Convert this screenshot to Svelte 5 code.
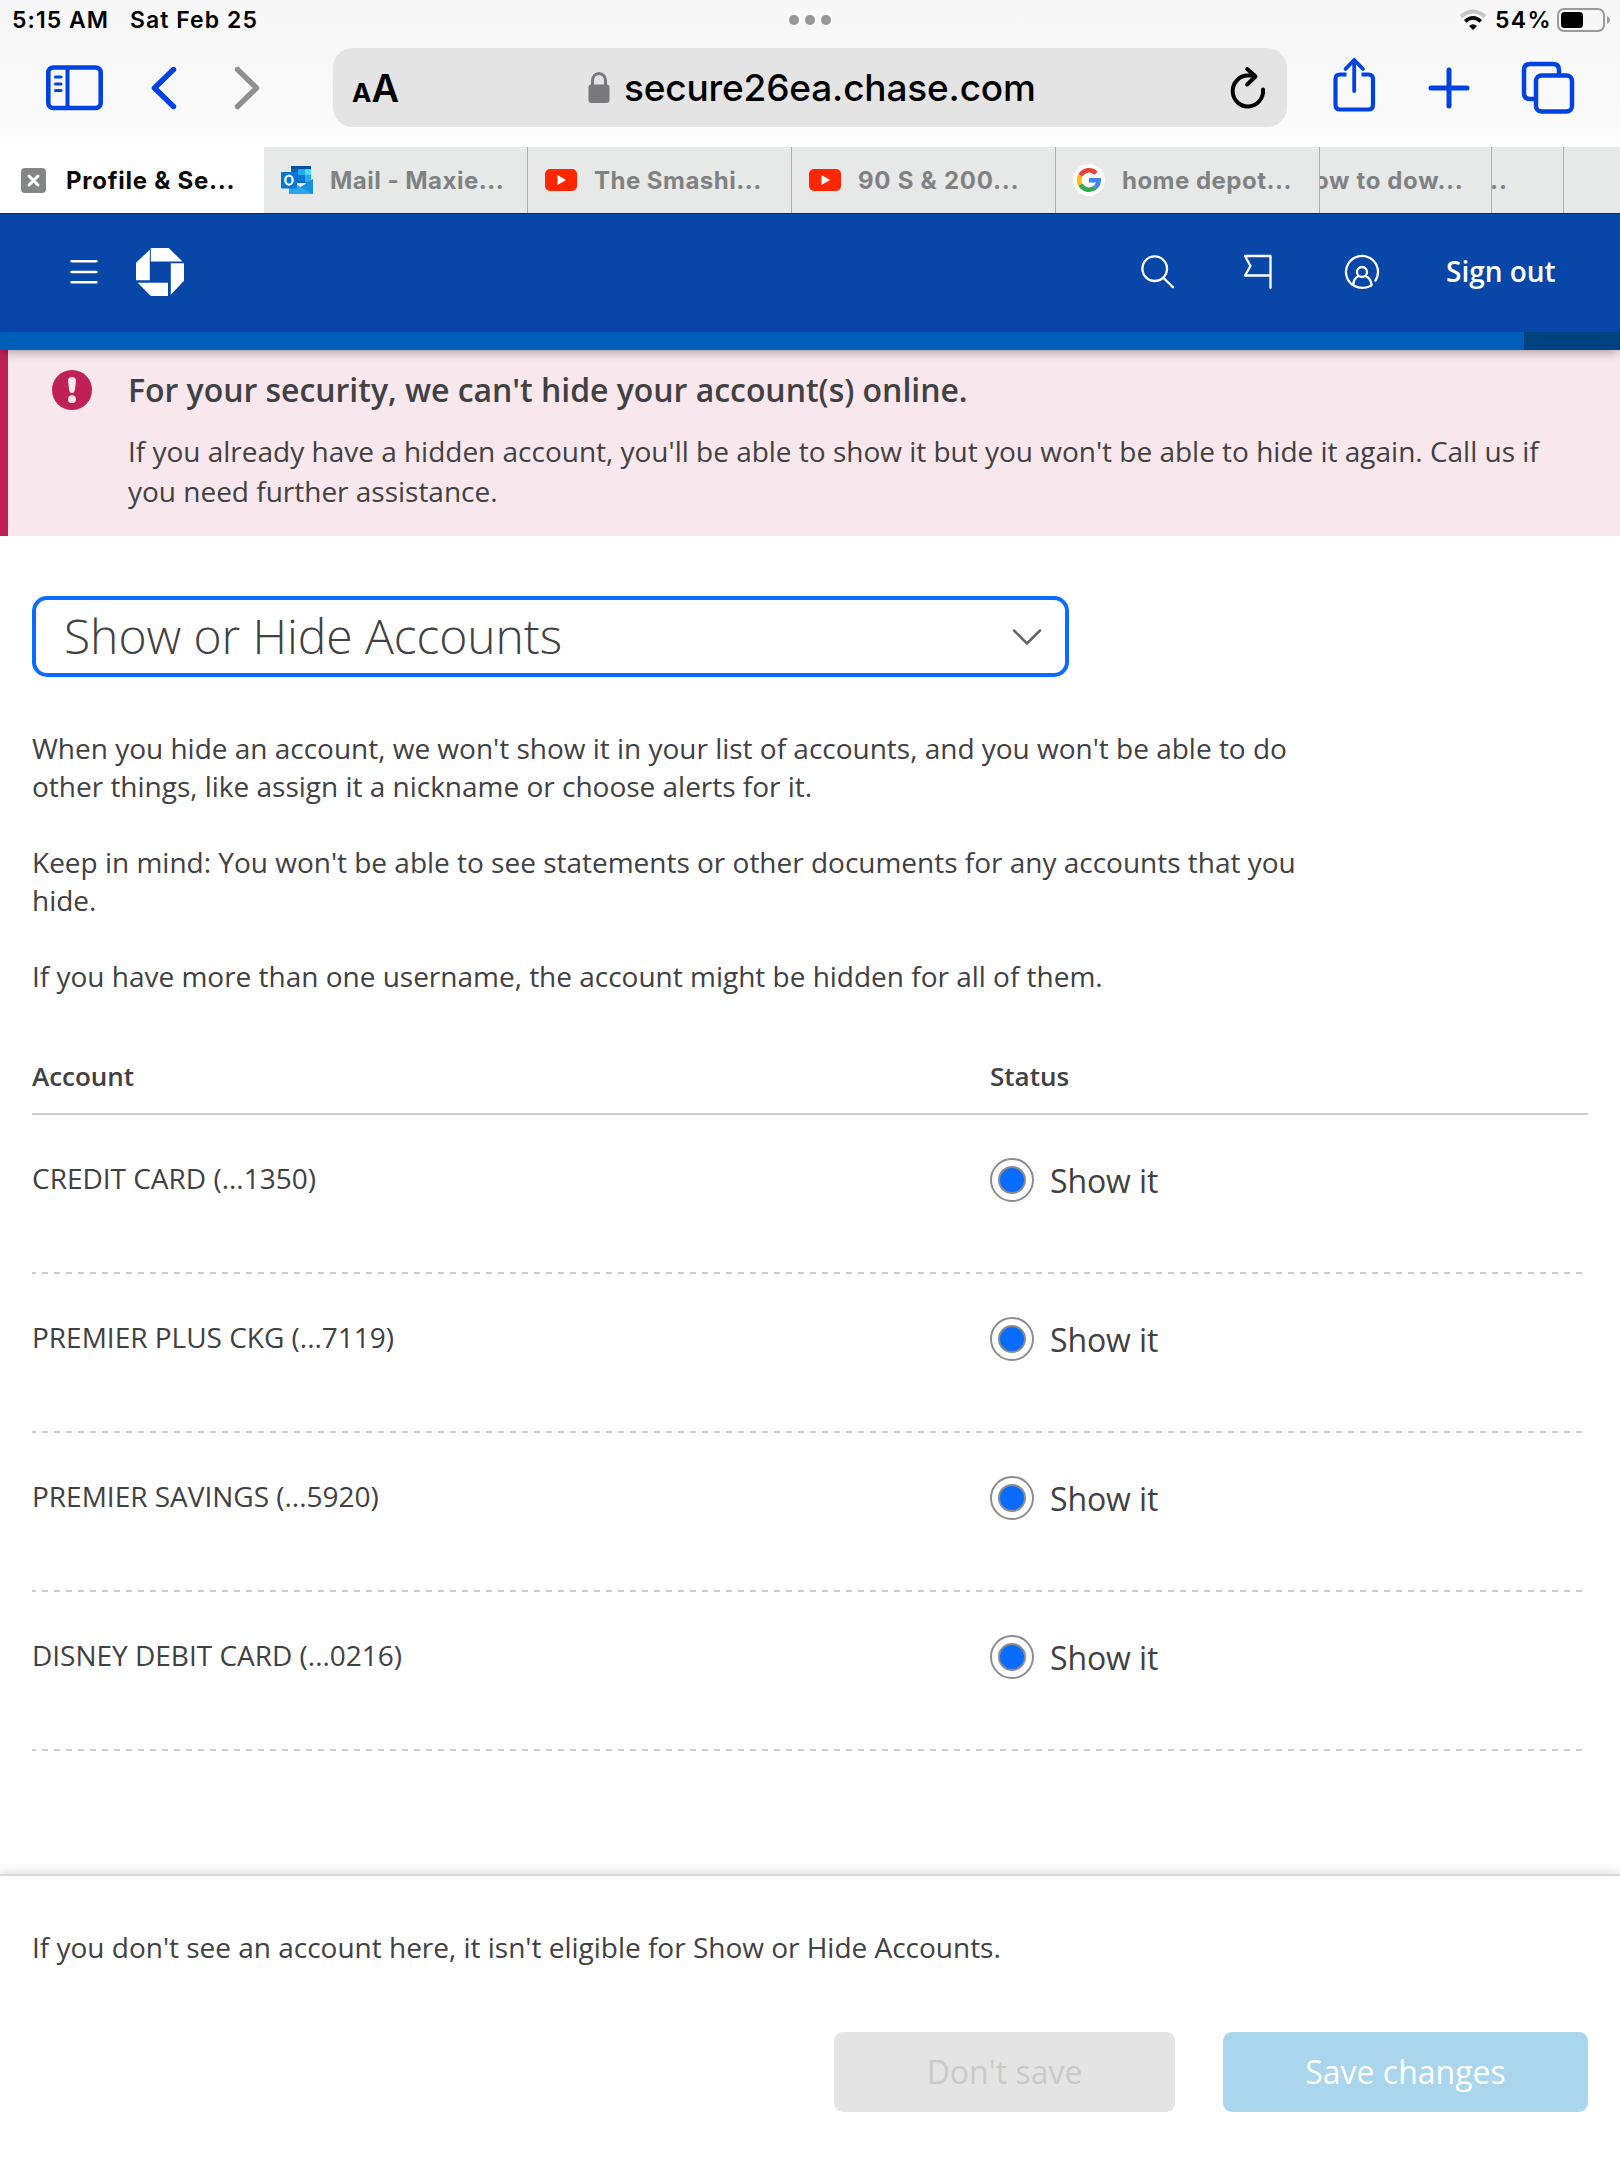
<script>
  const accounts = [
    'CREDIT CARD (...1350)',
    'PREMIER PLUS CKG (...7119)',
    'PREMIER SAVINGS (...5920)',
    'DISNEY DEBIT CARD (...0216)'
  ];
</script>

{#snippet youtube()}
  <svg class="favicon" viewBox="0 0 32 32">
    <rect x="0" y="5" width="32" height="22" rx="5" fill="#ff2600" />
    <path d="M12.5 11 L21 16 L12.5 21Z" fill="#fff" />
  </svg>
{/snippet}

<div class="page">
  <div class="browser">
    <div class="status">
      <span class="time">5:15 AM</span>
      <span class="date">Sat Feb 25</span>
      <div class="dots"><i></i><i></i><i></i></div>
      <svg class="wifi" width="28" height="22" viewBox="0 0 28 22" fill="none">
        <path d="M2 7.5 Q14 -2.5 26 7.5" stroke="#c6c6c6" stroke-width="4" />
        <path d="M6.2 12.3 Q14 5.5 21.8 12.3" stroke="#000" stroke-width="3.6" />
        <path d="M14 21 L10 17 Q14 13.6 18 17Z" fill="#000" />
      </svg>
      <span class="pct">54%</span>
      <svg class="battery" width="54" height="24" viewBox="0 0 54 24">
        <rect x="1" y="1" width="46" height="22" rx="6" fill="none" stroke="#9a9a9a" stroke-width="2" />
        <rect x="4" y="4" width="22" height="16" rx="3.5" fill="#000" />
        <path d="M50 8 Q53 9.5 53 12 Q53 14.5 50 16Z" fill="#9a9a9a" />
      </svg>
    </div>

    <div class="toolbar">
      <svg class="sidebar" width="57" height="46" viewBox="0 0 57 46" fill="none" stroke="#0042e0" stroke-linecap="round">
        <rect x="2.3" y="2.5" width="52.4" height="40.5" rx="5" stroke-width="4.6" />
        <path d="M21.5 3V43" stroke-width="4" stroke-linecap="butt" />
        <path d="M9.5 12H15M9.5 19H15M9.5 25.5H15" stroke-width="3" />
      </svg>
      <svg class="back" width="26" height="44" viewBox="0 0 26 44" fill="none" stroke="#0042e0" stroke-width="5.4" stroke-linecap="round" stroke-linejoin="round">
        <path d="M22.5 3.5L3.5 22L22.5 40.5" />
      </svg>
      <svg class="forward" width="26" height="44" viewBox="0 0 26 44" fill="none" stroke="#8f9094" stroke-width="5.4" stroke-linecap="round" stroke-linejoin="round">
        <path d="M3.5 3.5L22.5 22L3.5 40.5" />
      </svg>
      <div class="urlbar">
        <span class="reader"><small>A</small><b>A</b></span>
        <svg class="lock" width="22" height="32" viewBox="0 0 22 32">
          <path d="M4.5 14V8.5a6.5 7 0 0 1 13 0V14" fill="none" stroke="#78787e" stroke-width="3" />
          <rect x="0.5" y="12.5" width="21" height="18.5" rx="3" fill="#78787e" />
        </svg>
        <span class="host">secure26ea.chase.com</span>
        <svg class="reload" width="36" height="44" viewBox="0 0 36 44" fill="none" stroke="#000" stroke-width="4" stroke-linecap="round" stroke-linejoin="round">
          <path d="M33 23.5A15.2 15.5 0 1 1 17.8 9.5H24.5" />
          <path d="M17.2 3L25.5 10.5L17.2 18.5" />
        </svg>
      </div>
      <svg class="share" width="44" height="56" viewBox="0 0 44 56" fill="none" stroke="#0042e0" stroke-width="4.2" stroke-linecap="round" stroke-linejoin="round">
        <path d="M14.5 17.5H8Q3.5 17.5 3.5 22V47.5Q3.5 52.5 8 52.5H36.5Q41 52.5 41 47.5V22Q41 17.5 36.5 17.5H29.5" stroke-linecap="butt" />
        <path d="M22.2 34V3M13.5 12L22.2 3L31 12" stroke-width="3.8" />
      </svg>
      <svg class="plus" width="42" height="42" viewBox="0 0 42 42" stroke="#0042e0" stroke-width="5" stroke-linecap="round">
        <path d="M21 3V39M3 21H39" />
      </svg>
      <svg class="windows" width="54" height="54" viewBox="0 0 54 54" fill="none" stroke="#0042e0" stroke-width="4.5">
        <path d="M13 38H9Q3 38 3 32V9Q3 3 9 3H32Q38 3 38 9V13" />
        <rect x="15" y="14.5" width="36" height="36" rx="5.5" />
      </svg>
    </div>

    <div class="tabs">
      <div class="tab active">
        <svg class="close" width="25" height="25" viewBox="0 0 25 25">
          <rect width="25" height="25" rx="4" fill="#858686" />
          <path d="M8 8L17 17M17 8L8 17" stroke="#fff" stroke-width="3" stroke-linecap="round" />
        </svg>
        <span>Profile &amp; Se...</span>
      </div>
      <div class="tab">
        <svg class="favicon" viewBox="0 0 32 32">
          <path d="M10 2H30V19H10Z" fill="#0a64b8" />
          <path d="M10 2H30V5H10Z" fill="#0553a0" />
          <path d="M17 5H24V11.5H17Z" fill="#28a8ea" />
          <path d="M24 5H30V11.5H24Z" fill="#50d9ff" />
          <path d="M17 11.5H24V18H17Z" fill="#0078d4" />
          <path d="M24 11.5H30V18H24Z" fill="#28a8ea" />
          <path d="M8 17L20 23L32 15V30H8Z" fill="#28a8ea" />
          <path d="M20 23L32 15V30Z" fill="#1490df" />
          <rect x="0" y="8" width="16" height="16.5" rx="1" fill="#0078d4" />
          <ellipse cx="8" cy="16.2" rx="3.7" ry="4.5" fill="none" stroke="#fff" stroke-width="2.3" />
        </svg>
        <span>Mail - Maxie...</span>
      </div>
      <div class="tab">{@render youtube()}<span>The Smashi...</span></div>
      <div class="tab wide">{@render youtube()}<span>90 S &amp; 200...</span></div>
      <div class="tab">
        <svg class="favicon" viewBox="0 0 32 32">
          <circle cx="16" cy="16" r="16" fill="#fff" />
          <g fill="none" stroke-width="4.6">
            <path d="M23 9.3A9.7 9.7 0 0 0 7.5 11.3" stroke="#ea4335" />
            <path d="M7.5 11.3A9.7 9.7 0 0 0 7.5 20.7" stroke="#fbbc05" />
            <path d="M7.5 20.7A9.7 9.7 0 0 0 22.3 23.5" stroke="#34a853" />
            <path d="M22.3 23.5A9.7 9.7 0 0 0 25.7 16.3H16" stroke="#4285f4" />
          </g>
        </svg>
        <span>home depot...</span>
      </div>
      <div class="tab cut"><span>ow to dow...</span></div>
      <div class="tab sliver"><span>...</span></div>
      <div class="tab rest"></div>
    </div>
  </div>

  <header>
    <svg class="menu" width="28" height="28" viewBox="0 0 28 28" stroke="#fff" stroke-width="2.4" stroke-linecap="round">
      <path d="M1.5 3.3H26.5M1.5 14H26.5M1.5 24.2H26.5" />
    </svg>
    <svg class="logo" width="48" height="48" viewBox="0 0 48 48" fill="#fff">
      <path d="M14.8 0H32.7L46.5 13.5H14.8Z" />
      <path d="M34.8 15.3H48V32.7L34.8 46.7Z" />
      <path d="M1.7 34.7H32V48H14.8Z" />
      <path d="M0 14.7L13.8 1.7V32.3H0Z" />
    </svg>
    <svg class="search" width="34" height="34" viewBox="0 0 34 34" fill="none" stroke="#fff" stroke-width="2.3" stroke-linecap="round">
      <circle cx="13.7" cy="13.7" r="12.3" />
      <path d="M22.3 22.7L32 32.3" />
    </svg>
    <svg class="flag" width="30" height="36" viewBox="0 0 30 36" fill="none" stroke="#fff" stroke-width="2.3" stroke-linecap="round" stroke-linejoin="round">
      <path d="M27.5 34V2H2L7.5 12L2 21.5H27.5" />
    </svg>
    <svg class="user" width="36" height="36" viewBox="0 0 36 36" fill="none" stroke="#fff" stroke-width="2.3" stroke-linecap="round">
      <path d="M31.5 26.5A16 16 0 1 0 10 31.8Q18 36 26.5 32Q28 31.5 27.3 29.5C26.5 26 25 23.5 22.3 22.7" />
      <circle cx="18" cy="18" r="5" />
      <path d="M14 22.5Q9.5 24.5 9.3 31" />
    </svg>
    <span class="signout">Sign out</span>
  </header>
  <div class="strip"><div class="stripend"></div></div>

  <section class="alert">
    <svg width="40" height="40" viewBox="0 0 40 40">
      <circle cx="20" cy="20" r="20" fill="#bf2155" />
      <path d="M16 11Q16 7 20 7Q24 7 24 11L22.8 20.5Q22.5 23 20 23Q17.5 23 17.2 20.5Z" fill="#f8e7ec" />
      <circle cx="20" cy="29.2" r="3.9" fill="#f8e7ec" />
    </svg>
    <div>
      <h2>For your security, we can't hide your account(s) online.</h2>
      <p>If you already have a hidden account, you'll be able to show it but you won't be able to hide it again. Call us if<br />you need further assistance.</p>
    </div>
  </section>

  <main>
    <div class="select">
      <span>Show or Hide Accounts</span>
      <svg width="30" height="18" viewBox="0 0 30 18" fill="none" stroke="#666" stroke-width="2.5" stroke-linecap="round" stroke-linejoin="round">
        <path d="M2 2.5L15 15.5L28 2.5" />
      </svg>
    </div>
    <div class="copy">
      <p>When you hide an account, we won't show it in your list of accounts, and you won't be able to do<br />other things, like assign it a nickname or choose alerts for it.</p>
      <p>Keep in mind: You won't be able to see statements or other documents for any accounts that you<br />hide.</p>
      <p>If you have more than one username, the account might be hidden for all of them.</p>
    </div>

    <div class="table">
      <div class="thead"><span>Account</span><span>Status</span></div>
      {#each accounts as account}
        <div class="row">
          <span class="name">{account}</span>
          <div class="choice"><span class="radio"><i></i></span><span class="label">Show it</span></div>
          <svg class="dash" width="1556" height="2" stroke="#ccc" stroke-width="2" stroke-dasharray="6 6" stroke-dashoffset="2">
            <path d="M0 1H934" />
            <path d="M934 1H1556" />
          </svg>
        </div>
      {/each}
    </div>
  </main>

  <footer>
    <p>If you don't see an account here, it isn't eligible for Show or Hide Accounts.</p>
    <div class="actions">
      <div class="btn secondary">Don't save</div>
      <div class="btn primary">Save changes</div>
    </div>
  </footer>
</div>

<style>
  :global(body) { margin: 0; background: #fff; }
  * { box-sizing: border-box; }
  svg { display: block; flex: none; }
  p, h2 { margin: 0; }
  span { white-space: nowrap; }
  .page {
    width: 1620px;
    height: 2160px;
    overflow: hidden;
    display: flex;
    flex-direction: column;
    background: #fff;
    color: #414042;
    font-family: 'Open Sans', 'Noto Sans', sans-serif;
    font-size: 28px;
    letter-spacing: -0.01px;
  }

  .browser {
    height: 213px;
    flex: none;
    background: linear-gradient(#f7f7f7 0, #f9f9fa 100px, #fdfefd 147px);
    font-family: Inter, 'Liberation Sans', sans-serif;
    color: #000;
  }
  .status {
    height: 48px;
    display: flex;
    align-items: center;
    padding: 0 0 8px 12px;
    font-size: 23px;
    font-weight: 600;
    letter-spacing: 1.05px;
  }
  .time { width: 118px; }
  .date { width: 659px; }
  .dots { display: flex; gap: 6px; width: 670px; }
  .dots i { width: 10px; height: 10px; border-radius: 50%; background: #969696; }
  .pct { width: 70px; padding-left: 8px; letter-spacing: 1.4px; }

  .toolbar {
    height: 99px;
    display: flex;
    align-items: flex-start;
    padding-left: 46px;
  }
  .sidebar { margin-top: 17px; }
  .back { margin: 18px 0 0 48px; }
  .forward { margin: 18px 0 0 57px; }
  .urlbar {
    width: 954px;
    height: 79px;
    margin-left: 73px;
    border-radius: 20px;
    background: #e4e4e4;
    display: flex;
    align-items: center;
  }
  .reader { width: 236px; margin-left: 19px; line-height: 40px; margin-top: 5px; }
  .reader small { font-size: 26px; font-weight: 700; }
  .reader b { font-size: 38px; font-weight: 600; }
  .host { width: 606px; margin-left: 14px; font-size: 37px; font-weight: 500; letter-spacing: -0.17px; }
  .share { margin: 9px 0 0 45px; }
  .plus { margin: 19px 0 0 52px; }
  .windows { margin: 13px 0 0 51px; }

  .tabs { display: flex; height: 66px; }
  .tab {
    width: 264px;
    flex: none;
    display: flex;
    align-items: center;
    gap: 17px;
    overflow: hidden;
    padding: 0 0 0 17px;
    border-right: 1px solid #a9abab;
    background: #e7e8e8;
    color: #808282;
    font-size: 24px;
    font-weight: 700;
    letter-spacing: 0.48px;
  }
  .active { background: #fdfefd; color: #0b0b0b; padding-left: 21px; gap: 20px; border: 0; letter-spacing: 0.75px; }
  .wide { letter-spacing: 0.75px; }
  .favicon { width: 32px; height: 32px; }
  .cut { width: 172px; padding-left: 0; letter-spacing: 0.65px; }
  .cut span { margin-left: -6px; }
  .sliver { width: 72px; padding-left: 0; letter-spacing: 1px; }
  .sliver span { margin-left: -11px; }
  .rest { width: 56px; border: 0; }

  header {
    height: 119px;
    flex: none;
    display: flex;
    align-items: center;
    background: #0846a8;
    border-top: 1px solid #06296b;
    color: #fff;
    padding: 0 0 2px 70px;
  }
  .logo { margin-left: 38px; }
  .search { margin-left: 957px; }
  .flag { margin-left: 68px; }
  .user { margin-left: 71px; }
  .signout { margin: -2px 0 0 66px; font-weight: 560; }
  .strip {
    position: relative;
    height: 18px;
    flex: none;
    display: flex;
    justify-content: flex-end;
    background: #005eb8;
    box-shadow: 0 4px 10px -2px rgba(0, 0, 0, 0.35);
  }
  .stripend { width: 96px; background: #00417f; }

  .alert {
    height: 186px;
    flex: none;
    display: flex;
    gap: 36px;
    border-left: 8px solid #bf2155;
    background: #f8e7ec;
    padding: 20px 0 0 44px;
  }
  h2 { font-size: 32px; font-weight: 600; line-height: 40px; letter-spacing: -0.035px; }
  .alert p { margin-top: 21px; line-height: 40px; white-space: nowrap; }

  main { padding: 60px 32px 0; height: 1338px; flex: none; }
  .select {
    width: 1037px;
    height: 81px;
    border: 4px solid #0a6cff;
    border-radius: 15px;
    display: flex;
    align-items: center;
    justify-content: space-between;
    padding: 0 23px 0 28px;
    font-size: 48px;
    font-weight: 300;
    letter-spacing: -0.07px;
  }
  .select span { margin-top: -2px; }
  .copy { margin-top: 52px; line-height: 38px; white-space: nowrap; }
  .copy p + p { margin-top: 38px; }
  .table { padding-top: 40px; }
  .thead {
    display: grid;
    grid-template-columns: 958px 1fr;
    height: 80px;
    padding-top: 23px;
    border-bottom: 2px solid #ccc;
    font-size: 26px;
    font-weight: 600;
    line-height: 36px;
  }
  .row {
    height: 159px;
    display: grid;
    grid-template-columns: 958px 1fr;
    grid-template-rows: 157px 2px;
  }
  .name { padding-top: 45px; line-height: 36px; font-size: 28px; }
  .choice { display: flex; align-items: center; height: 44px; margin-top: 43px; gap: 16px; font-size: 32px; }
  .label { letter-spacing: -0.1px; }
  .radio { width: 44px; height: 44px; border: 2px solid #8c8c8c; border-radius: 50%; display: grid; place-items: center; }
  .radio i { width: 28px; height: 28px; border: 2px solid #8c8c8c; border-radius: 50%; background: #0a6cff; }
  .dash { grid-column: 1 / 3; }

  footer {
    flex: 1;
    border-top: 2px solid #d5dada;
    box-shadow: 0 -2px 10px rgba(0, 0, 0, 0.13);
    padding: 51px 32px 0;
  }
  footer p { line-height: 40px; white-space: nowrap; }
  .actions { display: flex; justify-content: flex-end; gap: 48px; margin-top: 65px; }
  .btn {
    height: 80px;
    border-radius: 9px;
    display: grid;
    place-items: center;
    padding-bottom: 2px;
    font-size: 32px;
    font-weight: 400;
  }
  .secondary { width: 341px; background: #e4e4e4; color: #cacaca; }
  .primary { width: 365px; background: #a9d6ec; color: #fff; }
</style>
